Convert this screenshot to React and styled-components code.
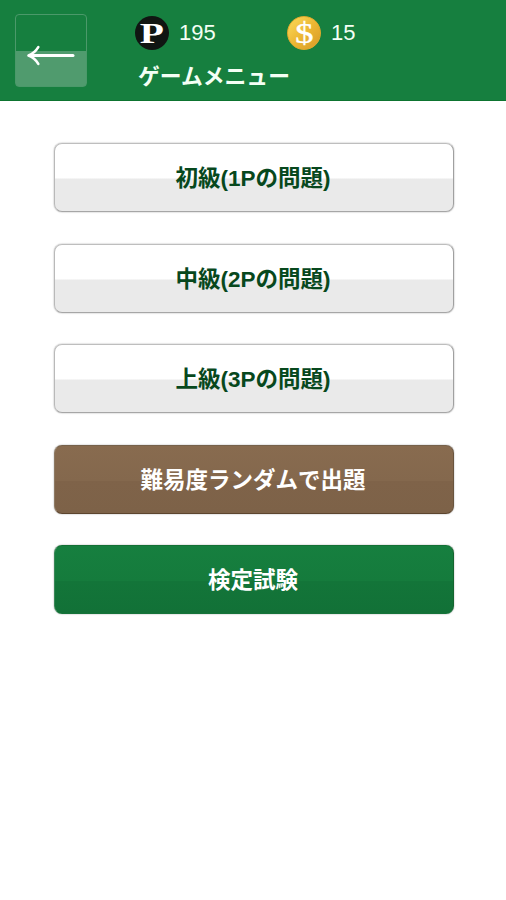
import React from 'react'
import styled, { createGlobalStyle, css } from 'styled-components'

const GlobalStyle = createGlobalStyle`
	* {
		box-sizing: border-box;
	}
	body {
		margin: 0;
		background: #fff;
		font-family: 'Liberation Sans', 'Noto Sans CJK JP', sans-serif;
	}
`

const View = styled.div`
	width: 100%;
	min-height: 100vh;
	background: #fff;
`

const Header = styled.header`
	height: 100.5px;
	padding: 14px 0 0 15px;
	display: flex;
	background: #167f3f;
	border-bottom: 1.5px solid #0d7430;
`

const BackButton = styled.button`
	width: 72px;
	height: 73px;
	padding: 0;
	display: flex;
	border: 1px solid #4b996a;
	border-radius: 4px;
	background: linear-gradient(#167f3f 36px, #509b6e 36px);
	cursor: pointer;
	svg {
		display: block;
	}
`

const HeaderInfo = styled.div`
	margin-left: 48px;
	color: #f4fff5;
`

const Counters = styled.div`
	height: 38px;
	display: flex;
	align-items: center;
`

const Counter = styled.div`
	width: 152px;
	display: flex;
	align-items: center;
	gap: 10px;
	font-size: 22px;
	line-height: 38px;
`

const Badge = styled.span`
	width: 34px;
	height: 34px;
	display: flex;
	justify-content: center;
	align-items: center;
	border-radius: 50%;
	color: #fff;
	font-family: 'Liberation Serif', serif;
	line-height: 34px;
	${({ $kind }) =>
		$kind === 'point'
			? css`
					background: #101512;
					font-size: 29px;
					font-weight: bold;
					span {
						transform: scaleX(1.36);
					}
			  `
			: css`
					background: linear-gradient(135deg, #f5cd4c 20%, #edb733 50%, #dda32b 85%);
					border: 1px solid #dfaa2c;
					font-size: 29px;
					-webkit-text-stroke: 0.3px #fff;
					span {
						transform: scaleX(1.28);
					}
			  `}
`

const Title = styled.h1`
	margin: 8px 0 0 3px;
	font-size: 21.8px;
	font-weight: bold;
	line-height: 34px;
`

const Menu = styled.main`
	padding: 42.5px 52px 0 54px;
	display: flex;
	flex-direction: column;
	gap: 31.6px;
`

const variants = {
	light: css`
		color: #07481d;
		border-color: #bebebe #a0a0a0 #a6a6a6 #b9b9b9;
		background: linear-gradient(#fff 34px, #eaeaea 35px);
	`,
	brown: css`
		color: #fff;
		border-color: #76614a #69543e #5c452e #8d7963;
		background: linear-gradient(#886b4f, #84684d 35px, #7f6349 35px, #7d6248);
	`,
	green: css`
		color: #fff;
		border-color: #137035 #14652f #16733a #398657;
		background: linear-gradient(#167f3f, #157b3c 35px, #137539 35px, #127137);
	`,
}

const MenuButton = styled.button`
	width: 100%;
	height: 69px;
	padding: 3px 2px 0 0;
	border: 1.5px solid;
	border-radius: 8px;
	font-family: inherit;
	font-size: 22.5px;
	font-weight: bold;
	line-height: 34px;
	cursor: pointer;
	box-shadow: 0 0 1.5px rgba(0, 0, 0, 0.45);
	${({ $variant }) => variants[$variant]}
`

const items = [
	{ label: '初級(1Pの問題)', variant: 'light' },
	{ label: '中級(2Pの問題)', variant: 'light' },
	{ label: '上級(3Pの問題)', variant: 'light' },
	{ label: '難易度ランダムで出題', variant: 'brown' },
	{ label: '検定試験', variant: 'green' },
]

export default function App() {
	return (
		<View>
			<GlobalStyle />
			<Header>
				<BackButton>
					<svg width="70" height="71" viewBox="0 0 70 71" fill="none" stroke="#fff">
						<path d="M57 40.5H14" strokeWidth="3" strokeLinecap="round" />
						<path
							d="M22.3 32.2C20 36 16.5 39 12.5 40.5C16.5 42 20 45 22.3 48.8"
							strokeWidth="2.6"
							strokeLinecap="round"
							strokeLinejoin="round"
						/>
					</svg>
				</BackButton>
				<HeaderInfo>
					<Counters>
						<Counter>
							<Badge $kind="point">
								<span>P</span>
							</Badge>
							195
						</Counter>
						<Counter>
							<Badge $kind="coin">
								<span>$</span>
							</Badge>
							15
						</Counter>
					</Counters>
					<Title>ゲームメニュー</Title>
				</HeaderInfo>
			</Header>
			<Menu>
				{items.map(({ label, variant }) => (
					<MenuButton key={label} $variant={variant}>
						{label}
					</MenuButton>
				))}
			</Menu>
		</View>
	)
}
